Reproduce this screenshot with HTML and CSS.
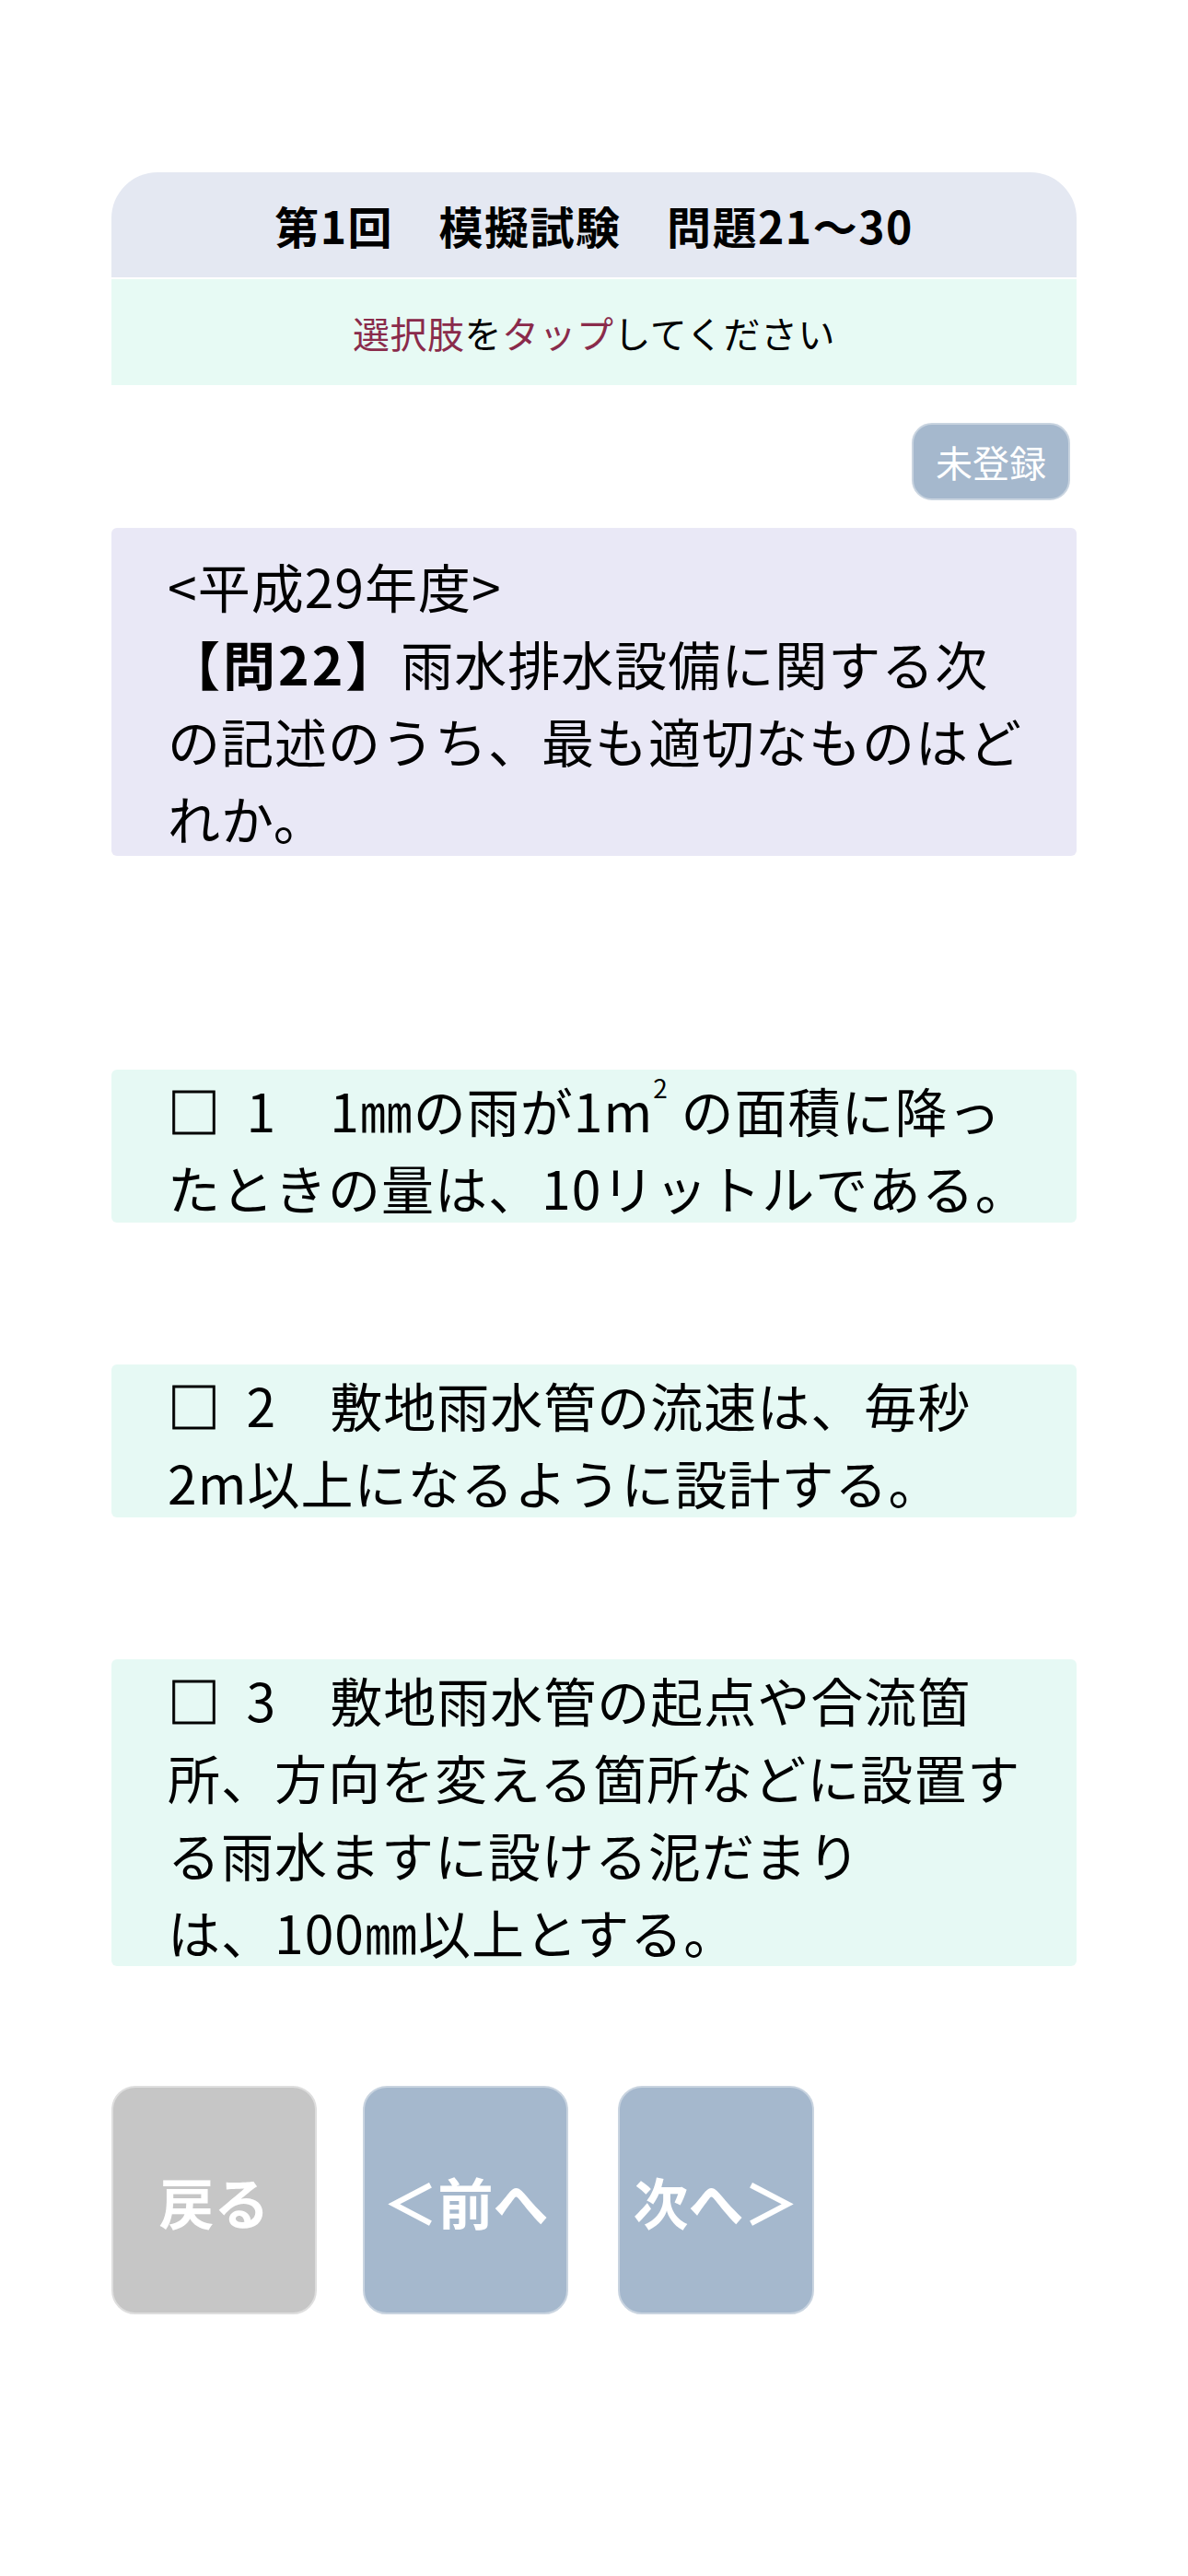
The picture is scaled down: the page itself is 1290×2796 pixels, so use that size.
FILE: index.html
```html
<!DOCTYPE html>
<html lang="ja">
<head>
<meta charset="utf-8">
<title>第1回 模擬試験 問題21～30</title>
<link rel="stylesheet" href="styles.css">
</head>
<body>
<main class="page">
  <header class="card-head">
    <h1 class="title">第1回　模擬試験　問題21～30</h1>
    <p class="instruction"><span class="accent">選択肢</span>を<span class="accent">タップ</span>してください</p>
  </header>

  <div class="status-row">
    <span class="badge">未登録</span>
  </div>

  <section class="question">
    <p>&lt;平成29年度&gt;<br><strong>【問22】</strong>雨水排水設備に関する次<br>の記述のうち、最も適切なものはど<br>れか。</p>
  </section>

  <ul class="options">
    <li class="option option-first"><span class="box">□</span>&nbsp;&nbsp;1　1㎜の雨が1m<sup class="sq">2</sup> の面積に降っ<br>たときの量は、10リットルである。</li>
    <li class="option"><span class="box">□</span>&nbsp;&nbsp;2　敷地雨水管の流速は、毎秒<br>2m以上になるように設計する。</li>
    <li class="option option-long"><span class="box">□</span>&nbsp;&nbsp;3　敷地雨水管の起点や合流箇<br>所、方向を変える箇所などに設置す<br>る雨水ますに設ける泥だまり<br>は、100㎜以上とする。</li>
  </ul>

  <nav class="nav">
    <a class="nav-btn nav-back">戻る</a>
    <a class="nav-btn nav-prev">＜前へ</a>
    <a class="nav-btn nav-next">次へ＞</a>
  </nav>
</main>
</body>
</html>
```

FILE: styles.css
```css
* {
  box-sizing: border-box;
}

html, body {
  margin: 0;
  padding: 0;
  background: #ffffff;
}

body {
  font-family: "Noto Sans CJK JP", "Noto Sans", sans-serif;
  color: #000000;
}

.page {
  width: 1048px;
  margin: 0 auto;
  padding-top: 187px;
  padding-bottom: 200px;
}

.card-head {
  display: flex;
  flex-direction: column;
  gap: 2px;
}

.title {
  margin: 0;
  height: 114px;
  display: flex;
  align-items: center;
  justify-content: center;
  background: #e4e8f2;
  border-radius: 50px 50px 0 0;
  font-size: 48px;
  font-weight: 700;
  letter-spacing: 1.5px;
}

.instruction {
  margin: 0;
  height: 115px;
  display: flex;
  align-items: center;
  justify-content: center;
  background: #e7faf4;
  font-size: 40px;
  font-weight: 400;
  letter-spacing: 0.5px;
}

.accent {
  color: #8a2b4b;
}

.status-row {
  display: flex;
  justify-content: flex-end;
  margin-top: 41px;
  padding-right: 7px;
}

.badge {
  width: 172px;
  height: 84px;
  display: flex;
  align-items: center;
  justify-content: center;
  background: #a5b8cd;
  border: 2px solid #c9d4e0;
  border-radius: 22px;
  color: #ffffff;
  font-size: 40px;
}

.question {
  margin-top: 30px;
  height: 356px;
  padding: 20px 20px 0 61px;
  background: #e9e8f6;
  border-radius: 6px;
  font-size: 57px;
  line-height: 84px;
  letter-spacing: 1px;
}

.question p {
  margin: 0;
}

.question strong {
  font-weight: 700;
  letter-spacing: 3px;
}

.options {
  list-style: none;
  margin: 0;
  padding: 0;
  display: flex;
  flex-direction: column;
  gap: 154px;
  margin-top: 232px;
}

.option {
  height: 166px;
  padding: 1px 20px 0 61px;
  background: #e6f9f4;
  border-radius: 6px;
  font-size: 57px;
  line-height: 84px;
  letter-spacing: 1px;
  white-space: nowrap;
}

.option-long {
  height: 333px;
}

.box {
  -webkit-text-stroke: 0.8px #000000;
}

.sq {
  font-size: 28px;
  line-height: 0;
  vertical-align: 37px;
}

.nav {
  display: flex;
  gap: 50px;
  margin-top: 130px;
}

.nav-btn {
  width: 223px;
  height: 248px;
  display: flex;
  align-items: center;
  justify-content: center;
  border-radius: 26px;
  color: #ffffff;
  font-size: 60px;
  font-weight: 700;
  text-decoration: none;
}

.nav-back {
  background: #c6c6c6;
  border: 2px solid #dedede;
}

.nav-prev,
.nav-next {
  background: #a5b8cd;
  border: 2px solid #c9d4e0;
}

.nav-next {
  width: 213px;
  margin-left: 4px;
}
```
